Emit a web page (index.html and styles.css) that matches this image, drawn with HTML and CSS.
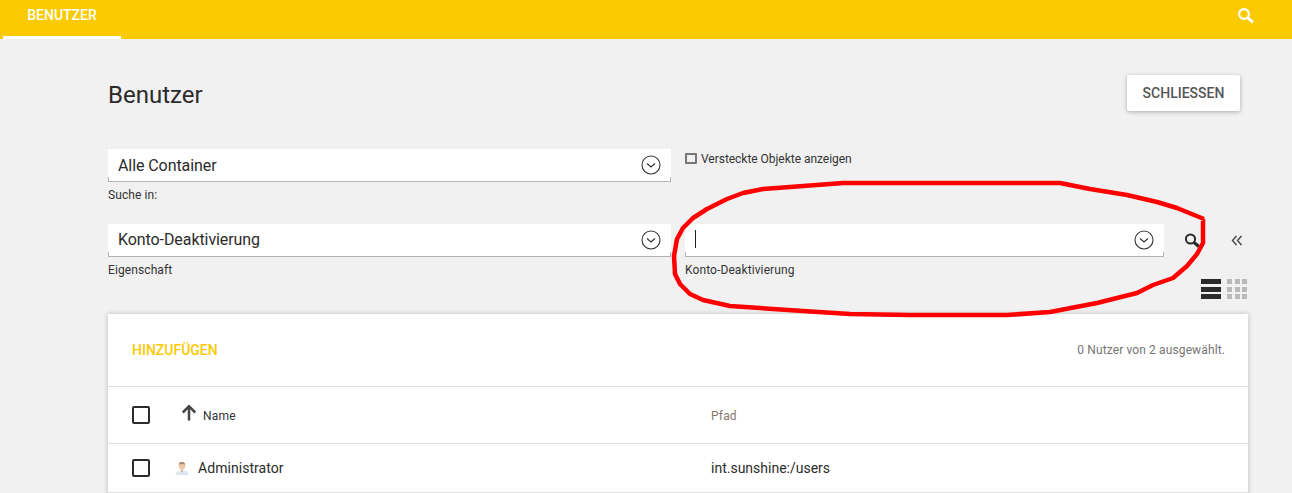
FILE: index.html
```html
<!DOCTYPE html>
<html lang="de">
<head>
<meta charset="utf-8">
<title>Benutzer</title>
<link rel="stylesheet" href="styles.css">
</head>
<body>
<header class="topbar">
  <div class="tab">BENUTZER</div>
  <svg class="top-search" width="18" height="18" viewBox="0 0 18 18"><circle cx="7" cy="7" r="4.9" fill="none" stroke="#fff" stroke-width="2.2"/><path d="M10.6 10.6 L16 15.4" stroke="#fff" stroke-width="3" fill="none"/></svg>
</header>
<main class="page">
  <div class="title-row">
    <h1 class="title">Benutzer</h1>
    <button class="close-btn">SCHLIESSEN</button>
  </div>
  <div class="filters">
    <div class="field-wrap">
      <div class="field"><span class="field-text">Alle Container</span>
        <svg class="chev" width="20" height="20" viewBox="0 0 20 20"><circle cx="10" cy="10" r="9" fill="none" stroke="#333" stroke-width="1.1"/><path d="M6 8.5 L10 12 L14 8.5" fill="none" stroke="#333" stroke-width="1.2"/></svg>
      </div>
      <div class="hint">Suche in:</div>
    </div>
    <label class="check-row"><span class="small-check"></span>Versteckte Objekte anzeigen</label>
    <div></div>
    <div class="field-wrap">
      <div class="field"><span class="field-text raised">Konto-Deaktivierung</span>
        <svg class="chev" width="20" height="20" viewBox="0 0 20 20"><circle cx="10" cy="10" r="9" fill="none" stroke="#333" stroke-width="1.1"/><path d="M6 8.5 L10 12 L14 8.5" fill="none" stroke="#333" stroke-width="1.2"/></svg>
      </div>
      <div class="hint">Eigenschaft</div>
    </div>
    <div class="field-wrap">
      <div class="field"><span class="caret raised"></span>
        <svg class="chev" width="20" height="20" viewBox="0 0 20 20"><circle cx="10" cy="10" r="9" fill="none" stroke="#333" stroke-width="1.1"/><path d="M6 8.5 L10 12 L14 8.5" fill="none" stroke="#333" stroke-width="1.2"/></svg>
      </div>
      <div class="hint">Konto-Deaktivierung</div>
    </div>
    <div class="actions">
      <svg class="act-search" width="17" height="16" viewBox="0 0 17 16"><circle cx="6.500" cy="6" r="4.600" fill="none" stroke="#2b2b2b" stroke-width="2"/><path d="M10 9.500 L15.500 14" stroke="#2b2b2b" stroke-width="3.200" fill="none"/></svg>
      <svg class="collapse" width="12" height="11" viewBox="0 0 12 11"><path d="M5.500 1 L1.500 5.500 L5.500 10 M10.500 1 L6.500 5.500 L10.500 10" fill="none" stroke="#444" stroke-width="1.400"/></svg>
    </div>
  </div>
  <div class="view-toggle">
    <div class="view-list"><i></i><i></i><i></i></div>
    <div class="view-grid"><i></i><i></i><i></i><i></i><i></i><i></i><i></i><i></i><i></i></div>
  </div>
  <section class="card">
    <div class="card-head">
      <span class="add">HINZUFÜGEN</span>
      <span class="count">0 Nutzer von 2 ausgewählt.</span>
    </div>
    <div class="row row-head">
      <span class="box"></span>
      <div class="col-name">
        <svg class="arrow" width="16" height="17" viewBox="0 0 16 17"><path d="M8 16.500 V2.500 M1.800 8.500 L8 2.200 L14.200 8.500" fill="none" stroke="#444" stroke-width="2.500"/></svg>
        <span class="name-head">Name</span>
      </div>
      <span class="path-head">Pfad</span>
    </div>
    <div class="row row-body">
      <span class="box"></span>
      <div class="col-user">
        <svg class="avatar" width="14" height="14" viewBox="0 0 14 14"><path d="M0.500 14 C0.500 10.500 3.500 9.500 7 9.500 C10.500 9.500 13.500 10.500 13.500 14 Z" fill="#dfe7f0"/><ellipse cx="7" cy="4.800" rx="3.200" ry="4" fill="#eec6a4"/><path d="M3.700 4 C3.500 0 10.500 0 10.300 4 C8.500 2.700 5.500 2.700 3.700 4 Z" fill="#a58a6e"/><path d="M5.800 9.300 L7 12 L8.200 9.300 Z" fill="#c9a27f"/></svg>
        <span class="user-name">Administrator</span>
      </div>
      <span class="user-path">int.sunshine:/users</span>
    </div>
  </section>
</main>
<svg class="scribble" width="1292" height="493" viewBox="0 0 1292 493"><path d="M1204 219 L1177 208 L1157 202 L1127 195 L1090 189 L1060 183 L1018 183 L940 183 L843 183 L790 187 L763 189 L743 193 L727 199 L707 209 L693 218 L683 228 L677 239 L674 256 L675 274 L680 284 L690 294 L703 300 L730 306 L760 308 L803 311 L850 314 L910 315 L1007 315 L1050 312 L1097 303 L1137 293 L1153 285 L1173 278 L1187 266 L1197 254 L1203 243 L1203 219" fill="none" stroke="#f00" stroke-width="4.500" stroke-linejoin="round"/></svg>
</body>
</html>
```
FILE: styles.css
```css
* { box-sizing: border-box; }
html, body { margin: 0; height: 493px; overflow: hidden; }
body { background: #f1f1f1; font-family: Roboto, "Liberation Sans", sans-serif; color: #2b2b2b; position: relative; }
.topbar { height: 39px; background: #fbca00; padding-left: 3px; padding-right: 37px; display: flex; justify-content: space-between; align-items: flex-start; }
.tab { width: 118px; height: 39px; border-bottom: 3px solid #fff; color: #fff; font-size: 14px; font-weight: 500; text-align: center; line-height: 31px; }
.top-search { margin-top: 7px; }
.page { padding: 0 44px 0 108px; }
.title-row { display: flex; justify-content: space-between; align-items: flex-start; height: 110px; padding-top: 36px; padding-right: 8px; }
.title { margin: 0; font-size: 24px; font-weight: 400; line-height: 40px; color: #2b2b2b; }
.close-btn { width: 113px; height: 36px; background: #fff; border: 0; border-radius: 2px; box-shadow: 0 1px 4px rgba(0,0,0,.3); font: 500 14px Roboto, sans-serif; color: #555; padding: 0; }
.filters { display: grid; grid-template-columns: 563px 479px 1fr; column-gap: 14px; row-gap: 0; }
.field-wrap { height: 75px; }
.field { height: 33px; background: #fff; border-bottom: 1px solid #b3b3b3; display: flex; align-items: center; justify-content: space-between; padding: 0 10px; position: relative; }
.field::before, .field::after { content: ""; position: absolute; bottom: 0; width: 1px; height: 4px; background: #b3b3b3; }
.field::before { left: 0; }
.field::after { right: 0; }
.field-text { font-size: 16px; color: #2b2b2b; letter-spacing: -0.08px; }
.raised { margin-bottom: 2px; }
.caret { width: 1px; height: 18px; background: #222; }
.hint { font-size: 12px; line-height: 14px; margin-top: 6px; color: #333; letter-spacing: 0.1px; }
.check-row { display: flex; align-items: flex-start; font-size: 12px; line-height: 14px; padding-top: 3px; color: #333; letter-spacing: -0.03px; }
.small-check { width: 12px; height: 11px; border: 2px solid #777; margin: 1px 4px 0 0; border-radius: 1px; }
.actions { display: flex; align-items: flex-start; height: 33px; padding-top: 9px; padding-left: 6px; }
.collapse { margin-left: 30px; margin-top: 2px; }
.view-toggle { display: flex; gap: 6px; height: 20px; margin-top: -20px; justify-content: flex-end; padding-right: 1px; }
.view-list { width: 20px; display: grid; gap: 2.5px; grid-template-rows: repeat(3, 5px); }
.view-list i { background: #2b2b2b; }
.view-grid { width: 20px; display: grid; grid-template: repeat(3, 5px) / repeat(3, 5px); gap: 2.5px; }
.view-grid i { background: #b9b9b9; }
.card { margin-top: 15px; width: 1140px; height: 200px; background: #fff; box-shadow: 0 0 5px rgba(0,0,0,.22); }
.card-head { height: 73px; padding: 0 23px 0 24px; display: flex; justify-content: space-between; align-items: center; border-bottom: 1px solid #e0e0e0; }
.add { color: #fbca00; font-size: 14px; font-weight: 500; }
.count { color: #757575; font-size: 12px; letter-spacing: 0.12px; }
.row { display: grid; grid-template-columns: 66px 513px 1fr; align-items: center; padding-left: 24px; border-bottom: 1px solid #e0e0e0; }
.row-head { height: 57px; }
.row-body { height: 49px; }
.box { width: 18px; height: 18px; border: 2px solid #2b2b2b; border-radius: 2px; }
.col-name { display: flex; align-items: center; gap: 7px; margin-left: -17px; }
.arrow { margin-top: -5px; }
.name-head { font-size: 12px; color: #333; letter-spacing: 0.2px; margin-top: 2px; margin-left: -1px; }
.path-head { font-size: 12px; color: #85796b; letter-spacing: 0.2px; margin-top: 2px; }
.col-user { display: flex; align-items: center; gap: 9px; margin-left: -23px; }
.user-name, .user-path { font-size: 14px; color: #2b2b2b; }
.user-name { letter-spacing: 0.05px; }
.scribble { position: absolute; left: 0; top: 0; pointer-events: none; }
```
